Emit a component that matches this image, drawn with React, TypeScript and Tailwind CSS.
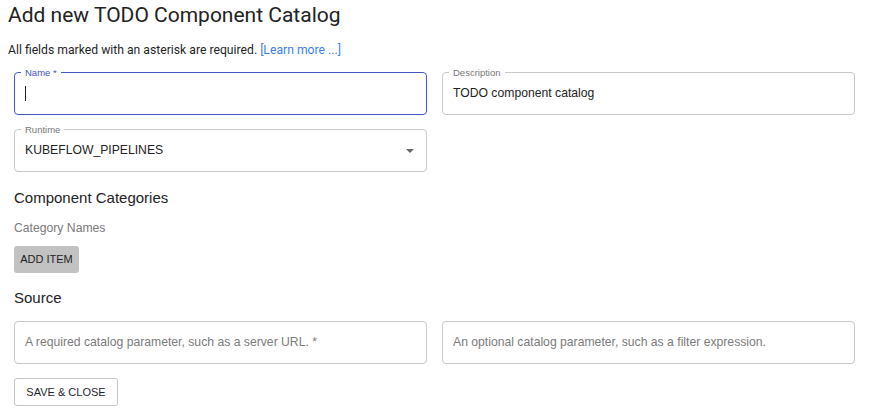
import React from "react";

const plex = { fontFamily: 'Roboto, "Noto Sans", sans-serif' };

function Field({
  label,
  value,
  placeholder,
  focused,
  select,
}: {
  label?: string;
  value?: string;
  placeholder?: string;
  focused?: boolean;
  select?: boolean;
}) {
  return (
    <div
      className={
        "relative h-[43px] w-[413px] rounded-[4px] border flex items-center pl-[10px] pr-[10px] " +
        (focused ? "border-[#4457c2] border-[1.5px]" : "border-[#c8c8c8]")
      }
    >
      {label && (
        <span
          className={
            "absolute -top-[6px] left-[6px] bg-white px-[4px] text-[9.5px] leading-[11px] " +
            (focused ? "text-[#4457c2]" : "text-[#777]")
          }
        >
          {label}
        </span>
      )}
      {focused && <span className="h-[15px] w-px bg-[#222]" />}
      {value && <span className="text-[12.2px] text-[#222]">{value}</span>}
      {placeholder && <span className="text-[12.2px] text-[#7b7b7b]">{placeholder}</span>}
      {select && (
        <svg className="ml-auto mr-[2px]" width="8" height="4" viewBox="0 0 8 4">
          <path d="M0 0 L8 0 L4 4 Z" fill="#666" />
        </svg>
      )}
    </div>
  );
}

export default function App() {
  return (
    <div
      className="w-[874px] h-[415px] bg-white overflow-hidden"
      style={{ fontFamily: '"Liberation Sans", Arial, sans-serif' }}
    >
      <div className="px-[8px] pt-[2px]">
        <h1 className="text-[21px] leading-[26px] text-[#222]" style={plex}>
          Add new TODO Component Catalog
        </h1>
        <p className="mt-[14px] text-[12.2px] leading-[16px] text-[#1f1f1f]" style={plex}>
          All fields marked with an asterisk are required.{" "}
          <span className="text-[#3b82e6]">[Learn more ...]</span>
        </p>
      </div>
      <div className="px-[14px] pt-[14px]">
        <div className="flex gap-[15px]">
          <Field label="Name *" focused />
          <Field label="Description" value="TODO component catalog" />
        </div>
        <div className="mt-[14px] flex">
          <Field label="Runtime" value="KUBEFLOW_PIPELINES" select />
        </div>
        <h2 className="mt-[16px] text-[15px] leading-[20px] text-[#222]">Component Categories</h2>
        <p className="mt-[12px] text-[12.2px] leading-[16px] text-[#7a7a7a]">Category Names</p>
        <button className="mt-[10px] h-[27px] w-[65px] rounded-[3px] bg-[#c2c2c2] text-[11px] text-[#1f1f1f]">
          ADD ITEM
        </button>
        <h2 className="mt-[15px] text-[15px] leading-[20px] text-[#222]">Source</h2>
        <div className="mt-[13px] flex gap-[15px]">
          <Field placeholder="A required catalog parameter, such as a server URL. *" />
          <Field placeholder="An optional catalog parameter, such as a filter expression." />
        </div>
        <button className="mt-[14px] h-[28px] w-[104px] rounded-[3px] border border-[#c4c4c4] bg-white text-[11px] text-[#1f1f1f]">
          SAVE &amp; CLOSE
        </button>
      </div>
    </div>
  );
}
